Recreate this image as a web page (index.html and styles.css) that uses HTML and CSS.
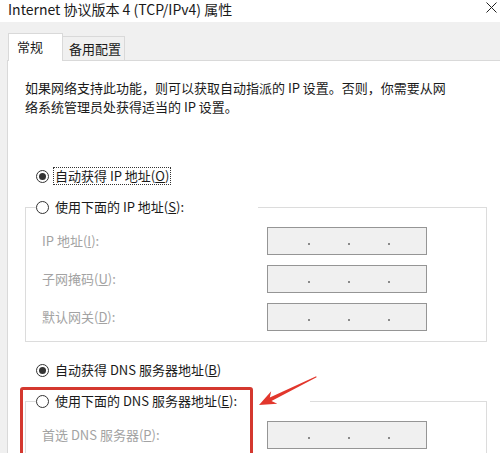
FILE: index.html
```html
<!DOCTYPE html>
<html lang="zh-CN">
<head>
<meta charset="utf-8">
<title>Internet 协议版本 4 (TCP/IPv4) 属性</title>
<link rel="stylesheet" href="styles.css">
</head>
<body>
<div class="window">
  <div class="titlebar">
    <span class="title">Internet 协议版本 4 (TCP/IPv4) 属性</span>
    <svg class="close" width="11" height="11" viewBox="0 0 11 11"><path d="M0.5 0.5 L10.5 10.5 M10.5 0.5 L0.5 10.5" stroke="#222" stroke-width="1" fill="none"/></svg>
  </div>
  <div class="tabstrip">
    <div class="tab tab-active">常规</div>
    <div class="tab tab-idle">备用配置</div>
  </div>
  <div class="body">
    <div class="panel">
      <p class="intro">如果网络支持此功能，则可以获取自动指派的 IP 设置。否则，你需要从网<br>络系统管理员处获得适当的 IP 设置。</p>

      <div class="radio-row row-auto-ip">
        <span class="radio checked"></span>
        <span class="radio-text focus">自动获得 IP 地址(<u>O</u>)</span>
      </div>

      <fieldset class="group group-ip">
        <legend class="legend legend-ip">
          <span class="radio"></span>
          <span class="radio-text">使用下面的 IP 地址(<u>S</u>):</span>
        </legend>
        <div class="rows">
          <span class="field-label">IP 地址(<u>I</u>):</span>
          <div class="ipfield"><i class="dot"></i><i class="dot"></i><i class="dot"></i></div>
          <span class="field-label">子网掩码(<u>U</u>):</span>
          <div class="ipfield"><i class="dot"></i><i class="dot"></i><i class="dot"></i></div>
          <span class="field-label">默认网关(<u>D</u>):</span>
          <div class="ipfield"><i class="dot"></i><i class="dot"></i><i class="dot"></i></div>
        </div>
      </fieldset>

      <div class="radio-row row-auto-dns">
        <span class="radio checked"></span>
        <span class="radio-text plain">自动获得 DNS 服务器地址(<u>B</u>)</span>
      </div>

      <fieldset class="group group-dns">
        <legend class="legend legend-dns">
          <span class="radio"></span>
          <span class="radio-text">使用下面的 DNS 服务器地址(<u>E</u>):</span>
        </legend>
        <div class="rows">
          <span class="field-label">首选 DNS 服务器(<u>P</u>):</span>
          <div class="ipfield"><i class="dot"></i><i class="dot"></i><i class="dot"></i></div>
        </div>
      </fieldset>
    </div>
  </div>

  <div class="highlight"></div>
  <svg class="arrow" width="75" height="45" viewBox="0 0 75 45">
    <polygon points="9,35 27.3,33.8 21.5,31.1 66.6,7.3 66.2,6.3 19.8,27.5 21.2,21.2" fill="#e2362c"/>
  </svg>
</div>
</body>
</html>
```

FILE: styles.css
```css
* {
  box-sizing: border-box;
}

html, body {
  margin: 0;
  padding: 0;
  background: #ffffff;
}

body {
  width: 500px;
  height: 453px;
  overflow: hidden;
  font-family: "Noto Sans CJK SC", "Noto Sans", sans-serif;
  font-size: 13px;
  color: #1a1a1a;
}

.window {
  position: relative;
  width: 500px;
  height: 453px;
  overflow: hidden;
  display: flex;
  flex-direction: column;
}

.titlebar {
  height: 22px;
  flex: none;
  display: flex;
  justify-content: space-between;
  align-items: flex-start;
  padding: 0 3px 0 8px;
  background: #ffffff;
}

.title {
  font-family: "Noto Sans CJK SC", "Noto Sans", sans-serif;
  font-size: 14px;
  line-height: 18px;
  color: #1a1a1a;
}

.close {
  margin-top: 2px;
}

.tabstrip {
  height: 38px;
  flex: none;
  display: flex;
  align-items: flex-end;
  padding-left: 8px;
  background: #f0f0f0;
}

.tab {
  font-size: 13px;
  line-height: 18px;
  border: 1px solid #d9d9d9;
  border-bottom: none;
}

.tab-active {
  position: relative;
  z-index: 1;
  width: 55px;
  height: 28px;
  margin-bottom: -1px;
  padding: 4px 0 0 8px;
  background: #ffffff;
}

.tab-idle {
  width: 62px;
  height: 24px;
  padding: 3px 0 0 6px;
  border-left: none;
  background: #f0f0f0;
}

.body {
  flex: 1;
  background: #f0f0f0;
  padding-left: 7px;
}

.panel {
  height: 100%;
  background: #ffffff;
  border-left: 1px solid #d9d9d9;
  border-top: 1px solid #d9d9d9;
  padding: 17px 0 0 17px;
}

.intro {
  margin: 0;
  line-height: 19px;
  white-space: nowrap;
}

.radio-row {
  height: 22px;
  display: flex;
  align-items: center;
  padding-left: 11px;
}

.row-auto-ip {
  margin-top: 49px;
}

.row-auto-dns {
  margin-top: 17px;
}

.radio {
  flex: none;
  width: 13px;
  height: 13px;
  border: 1px solid #333333;
  border-radius: 50%;
  background: #ffffff;
  display: flex;
  align-items: center;
  justify-content: center;
}

.radio.checked::after {
  content: "";
  width: 7px;
  height: 7px;
  border-radius: 50%;
  background: #333333;
}

.radio-text {
  line-height: 16px;
  margin-left: 6px;
  white-space: nowrap;
}

.radio-text.focus {
  margin-left: 4px;
  padding: 0 1px;
  border: 1px dotted #333333;
}

.group {
  width: 462px;
  margin: 9px 0 0 0;
  padding: 9px 0 10px 16px;
  border: 1px solid #dcdcdc;
  min-inline-size: 0;
}

.legend {
  height: 22px;
  margin-left: -6px;
  padding: 0;
  display: flex;
  align-items: center;
}

.legend-ip {
  width: 222px;
}

.legend-dns {
  width: 274px;
}

.rows {
  display: grid;
  grid-template-columns: 225px 160px;
  row-gap: 10px;
  align-items: center;
}

.field-label {
  color: #a3a3a3;
  line-height: 18px;
  white-space: nowrap;
}

.ipfield {
  height: 28px;
  border: 1px solid #959595;
  background: #f0f0f0;
  display: flex;
  align-items: center;
  gap: 38px;
  padding-left: 40px;
}

.dot {
  width: 2px;
  height: 2px;
  margin-top: 5px;
  background: #8a8a8a;
}

.highlight {
  position: absolute;
  left: 20px;
  top: 387px;
  width: 233px;
  height: 110px;
  border: 3.5px solid #d4382f;
  border-radius: 3px;
}

.arrow {
  position: absolute;
  left: 250px;
  top: 370px;
}
```
